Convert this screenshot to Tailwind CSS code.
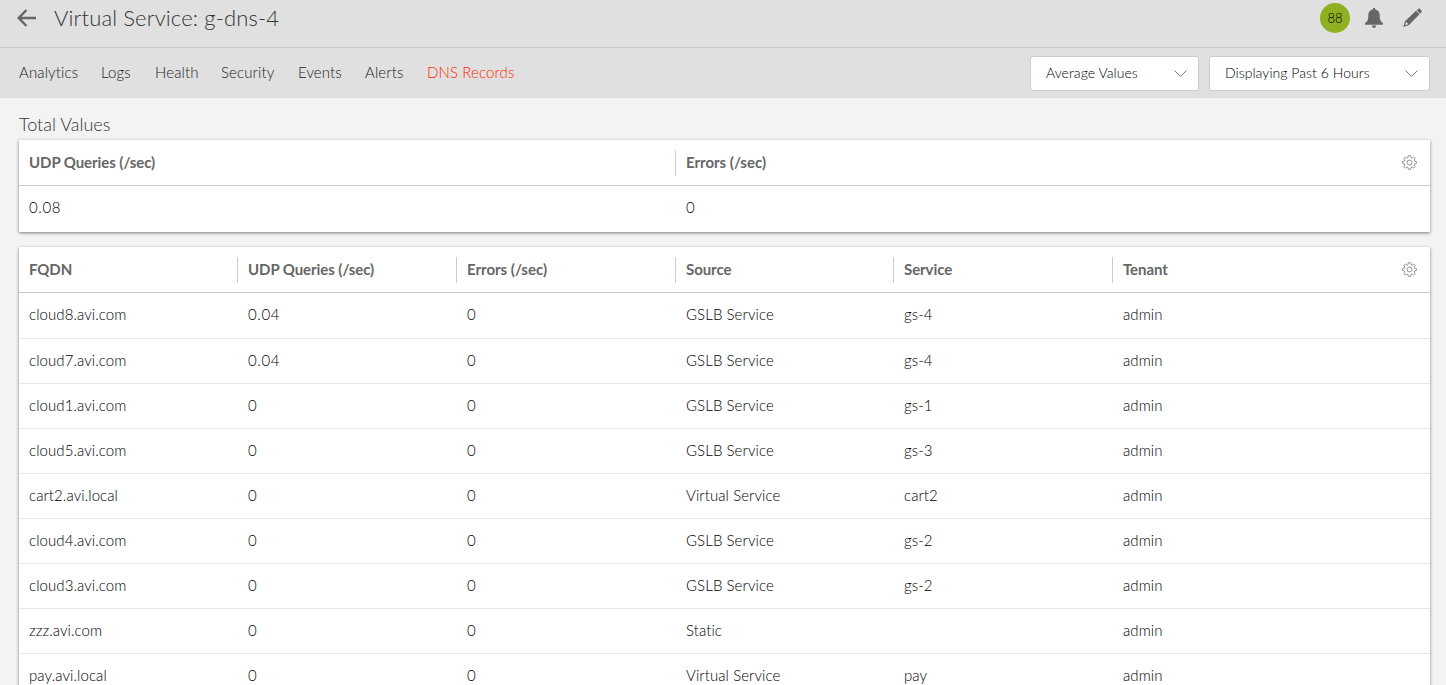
<!DOCTYPE html>
<html lang="en">
<head>
<meta charset="utf-8">
<title>Virtual Service: g-dns-4</title>
<script src="https://cdn.jsdelivr.net/npm/@tailwindcss/browser@4"></script>
</head>
<body class="h-[685px] overflow-hidden bg-[#f3f3f3] font-['Lato',sans-serif] text-[15px] text-black">
<header class="flex h-12 items-center justify-between border-b border-[#c8c8c8] bg-[#e0e0e0] pr-6 pb-[11px] pl-[17px] text-[#666]">
  <div class="flex items-center">
    <svg class="h-[18px] w-5" viewBox="0 0 20 18" fill="none" stroke="#666" stroke-width="2.400"><path d="M9.500 1 1.700 9l7.800 8M1.500 9H19"/></svg>
    <h1 class="ml-[17px] text-[22px] leading-7 font-light tracking-[0.14px] text-[#333]">Virtual Service: g-dns-4</h1>
  </div>
  <div class="flex items-center">
    <div class="flex size-[30px] items-center justify-center rounded-full bg-[#8fb021] pt-px text-[13px] font-light text-black">88</div>
    <svg class="ml-[15px] h-5 w-[18px]" viewBox="0 0 18 20" fill="#666"><path d="M9 0c.9 0 1.400.6 1.400 1.500C13.200 2.200 14.700 4.300 14.700 7c0 4.200.6 6.500 3.300 8v1.700H0V15c2.700-1.500 3.300-3.800 3.300-8 0-2.700 1.500-4.800 4.300-5.500C7.600.6 8.100 0 9 0ZM6.800 17.500h4.400C11 19 10.200 20 9 20s-2-1-2.200-2.500Z"/></svg>
    <svg class="ml-5 h-5 w-[19px]" viewBox="0 0 19 20" fill="#666"><path d="M13.700 2.200 15.200 1c.7-.6 1.300-.5 1.800 0l1.400 1.400c.5.500.6 1.100 0 1.800l-1.300 1.500Z"/><path fill-rule="evenodd" d="m13 2.800 3.500 3.500L6 16.900.2 19l1.800-5.700ZM3 14.300l-1.100 3 3-1c0-1.100-.7-1.900-1.900-2Z"/></svg>
  </div>
</header>
<nav class="flex h-[50px] items-center justify-between bg-[#e0e0e0] pr-4 pl-[19px]">
  <div class="flex pb-0.5 text-[15px] leading-5 font-light tracking-[0.12px] whitespace-nowrap text-[#222]">
    <a class="w-[82px]">Analytics</a><a class="w-[54px]">Logs</a><a class="w-[66px]">Health</a><a class="w-[77px]">Security</a><a class="w-[67px]">Events</a><a class="w-[62px]">Alerts</a><a class="text-[#ff2a00]">DNS Records</a>
  </div>
  <div class="flex gap-[10px] text-[14px] font-light tracking-[0.05px]">
    <div class="flex h-[35px] w-[169px] items-center justify-between rounded-[3px] border border-[#ccc] bg-white pr-[11px] pl-[15px]">
      <span class="pb-0.5">Average Values</span>
      <svg class="h-[7px] w-[13px]" viewBox="0 0 13 7" fill="none" stroke="#777"><path d="m.5.5 6 6 6-6"/></svg>
    </div>
    <div class="flex h-[35px] w-[221px] items-center justify-between rounded-[3px] border border-[#ccc] bg-white pr-[11px] pl-[15px]">
      <span class="pb-0.5">Displaying Past 6 Hours</span>
      <svg class="h-[7px] w-[13px]" viewBox="0 0 13 7" fill="none" stroke="#777"><path d="m.5.5 6 6 6-6"/></svg>
    </div>
  </div>
</nav>
<main class="px-[19px] pt-[14px] pr-4">
  <h2 class="h-7 text-[18px] leading-6 font-light text-[#333]">Total Values</h2>
  <section class="h-[92px] bg-white shadow-[0_1px_3px_rgba(0,0,0,0.5)]">
    <div class="flex h-[46px] items-center border-b border-[#c8c8c8] font-bold text-[#666]">
      <div class="w-[656px] pl-[10px]"><span class="tracking-[-0.07px]">UDP Queries (/sec)</span></div>
      <div class="flex h-[26px] flex-1 items-center border-l border-[#ccc] pl-[10px]"><span>Errors (/sec)</span></div>
      <svg class="mr-[13px] size-[15px]" viewBox="0 0 16 16" fill="none" stroke="#8c8c8c"><path d="M6.700.8h2.600l.3 2 1.300.5 1.600-1.200 1.600 1.600-1.200 1.600.5 1.300 1.900.2v2.400l-1.900.3-.5 1.300 1.200 1.600-1.600 1.600-1.600-1.200-1.300.5-.3 1.900H6.700l-.3-1.900-1.300-.5L3.500 14l-1.600-1.600 1.200-1.600-.5-1.300-1.900-.3V6.800l1.900-.2.500-1.300L1.900 3.700l1.600-1.600 1.600 1.200 1.300-.5Z"/><circle cx="8" cy="8" r="2.600"/></svg>
    </div>
    <div class="flex h-[45px] items-center pb-0.5 font-light tracking-[0.6px]">
      <div class="w-[657px] pl-[10px]">0.08</div><div class="pl-[10px]">0</div>
    </div>
  </section>
  <section class="mt-[15px] bg-white shadow-[0_1px_3px_rgba(0,0,0,0.5)]">
    <div class="flex h-[46px] items-center border-b border-[#c8c8c8] font-bold tracking-[-0.07px] text-[#666]">
      <div class="w-[218px] pl-[10px]"><span>FQDN</span></div>
      <div class="flex h-[26px] w-[219px] items-center border-l border-[#ccc] pl-[10px]"><span>UDP Queries (/sec)</span></div>
      <div class="flex h-[26px] w-[219px] items-center border-l border-[#ccc] pl-[10px]"><span class="tracking-normal">Errors (/sec)</span></div>
      <div class="flex h-[26px] w-[218px] items-center border-l border-[#ccc] pl-[10px]"><span>Source</span></div>
      <div class="flex h-[26px] w-[219px] items-center border-l border-[#ccc] pl-[10px]"><span>Service</span></div>
      <div class="flex h-[26px] flex-1 items-center border-l border-[#ccc] pl-[10px]"><span>Tenant</span></div>
      <svg class="mr-[13px] size-[15px]" viewBox="0 0 16 16" fill="none" stroke="#8c8c8c"><path d="M6.700.8h2.600l.3 2 1.300.5 1.600-1.200 1.600 1.600-1.200 1.600.5 1.300 1.900.2v2.400l-1.900.3-.5 1.300 1.200 1.600-1.600 1.600-1.600-1.200-1.300.5-.3 1.900H6.700l-.3-1.900-1.300-.5L3.500 14l-1.600-1.600 1.200-1.600-.5-1.300-1.900-.3V6.800l1.900-.2.500-1.300L1.900 3.700l1.600-1.600 1.600 1.200 1.300-.5Z"/><circle cx="8" cy="8" r="2.600"/></svg>
    </div>
    <div id="rows" class="font-light"></div>
  </section>
</main>
<script>
const records = [
  ['cloud8.avi.com', '0.04', '0', 'GSLB Service', 'gs-4', 'admin'],
  ['cloud7.avi.com', '0.04', '0', 'GSLB Service', 'gs-4', 'admin'],
  ['cloud1.avi.com', '0', '0', 'GSLB Service', 'gs-1', 'admin'],
  ['cloud5.avi.com', '0', '0', 'GSLB Service', 'gs-3', 'admin'],
  ['cart2.avi.local', '0', '0', 'Virtual Service', 'cart2', 'admin'],
  ['cloud4.avi.com', '0', '0', 'GSLB Service', 'gs-2', 'admin'],
  ['cloud3.avi.com', '0', '0', 'GSLB Service', 'gs-2', 'admin'],
  ['zzz.avi.com', '0', '0', 'Static', '', 'admin'],
  ['pay.avi.local', '0', '0', 'Virtual Service', 'pay', 'admin'],
];
document.getElementById('rows').innerHTML = records.map((r, i) =>
  `<div class="grid grid-cols-[219px_219px_219px_218px_219px_1fr] items-center border-b border-[#e8e8e8] pb-0.5 ${i ? 'h-[45px]' : 'h-[46px]'}">` +
  r.map((c, k) => `<div class="pl-[10px]"><span class="${k === 1 ? 'tracking-[0.6px]' : 'tracking-[0.08px]'}">${c}</span></div>`).join('') + '</div>').join('');
</script>
</body>
</html>
